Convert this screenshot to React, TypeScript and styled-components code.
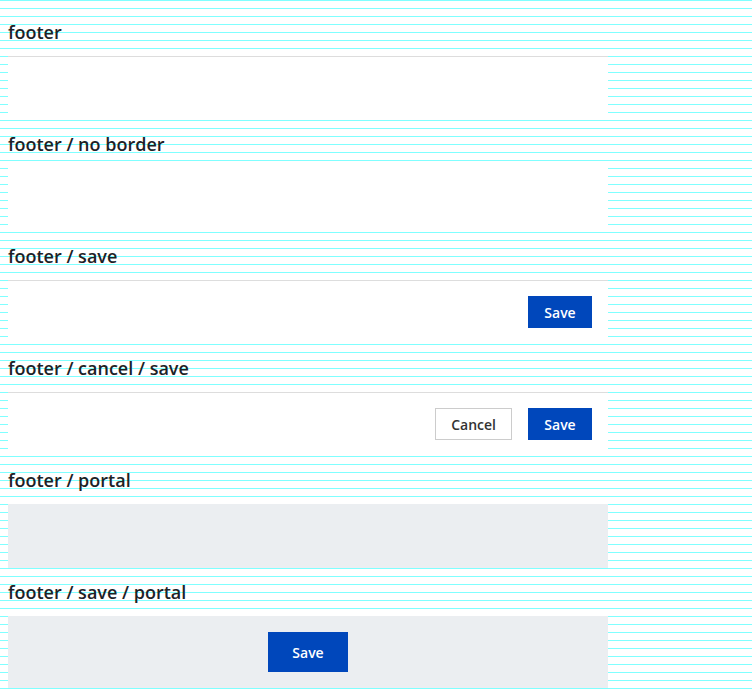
import React from "react";
import styled, { createGlobalStyle } from "styled-components";

const GlobalStyle = createGlobalStyle`
  body {
    margin: 0;
    padding: 8px;
    font-family: "Open Sans", "Liberation Sans", sans-serif;
    background-color: #ffffff;
    background-image: linear-gradient(to bottom, #80ffff 1px, transparent 1px);
    background-size: 100% 8px;
  }
`;

const Title = styled.div`
  height: 48px;
  display: flex;
  align-items: center;
  font-size: 18px;
  font-weight: 600;
  color: #1d2226;
`;

const Footer = styled.div<{ $border?: boolean; $portal?: boolean; $center?: boolean }>`
  width: 600px;
  min-height: 64px;
  box-sizing: border-box;
  padding: 16px;
  display: flex;
  justify-content: ${p => (p.$center ? "center" : "flex-end")};
  align-items: flex-start;
  gap: 16px;
  background: ${p => (p.$portal ? "#ebeef1" : "#ffffff")};
  box-shadow: ${p => (p.$border ? "inset 0 1px 0 #dddddd" : "none")};
`;

const Button = styled.button<{ $primary?: boolean; $large?: boolean }>`
  height: ${p => (p.$large ? "40px" : "32px")};
  min-width: ${p => (p.$large ? "80px" : "64px")};
  padding: 0 15px;
  box-sizing: border-box;
  font-family: "Open Sans", "Liberation Sans", sans-serif;
  font-size: 14px;
  font-weight: 600;
  border: 1px solid ${p => (p.$primary ? "#0047bb" : "#cccccc")};
  background: ${p => (p.$primary ? "#0047bb" : "#ffffff")};
  color: ${p => (p.$primary ? "#ffffff" : "#333333")};
  cursor: pointer;
`;

export default function App() {
  return (
    <>
      <GlobalStyle />
      <Title>footer</Title>
      <Footer $border />
      <Title>footer / no border</Title>
      <Footer />
      <Title>footer / save</Title>
      <Footer $border>
        <Button $primary>Save</Button>
      </Footer>
      <Title>footer / cancel / save</Title>
      <Footer $border>
        <Button>Cancel</Button>
        <Button $primary>Save</Button>
      </Footer>
      <Title>footer / portal</Title>
      <Footer $portal />
      <Title>footer / save / portal</Title>
      <Footer $portal $center>
        <Button $primary $large>Save</Button>
      </Footer>
    </>
  );
}
